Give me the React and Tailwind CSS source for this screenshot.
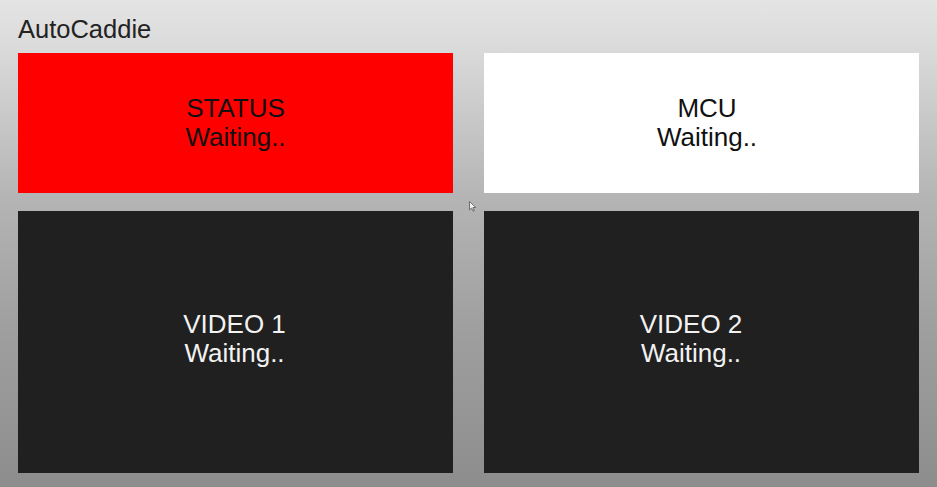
import React from "react";

const panels = [
  { title: "STATUS", box: "bg-[#ff0000] text-[#111111]", shift: "" },
  { title: "MCU", box: "bg-white text-[#111111]", shift: "pl-[11px]" },
  { title: "VIDEO 1", box: "bg-[#202020] text-[#f2f2f2] pb-[6px]", shift: "pr-[2px]" },
  { title: "VIDEO 2", box: "bg-[#202020] text-[#f2f2f2] pb-[6px]", shift: "pr-[21px]" },
];

const Panel = ({ title, box, shift }) => {
  return (
    <div className={`flex items-center justify-center ${box}`}>
      <div className={`text-center text-[26px] leading-[29px] ${shift}`}>
        <div>{title}</div>
        <div>Waiting..</div>
      </div>
    </div>
  );
};

const App = () => {
  return (
    <div
      className="relative w-[937px] h-[487px] overflow-hidden flex flex-col px-[18px] pt-[14px] pb-[14px] bg-[linear-gradient(180deg,#e4e4e4_0%,#dadada_10%,#b5b5b5_40%,#a0a0a0_66%,#8d8d8d_100%)]"
      style={{ fontFamily: '"Liberation Sans", Arial, sans-serif' }}
    >
      {/* header */}
      <h1 className="text-[25.5px] leading-[30px] text-[#222222] font-normal">AutoCaddie</h1>

      {/* panels */}
      <div className="mt-[9px] flex-1 grid grid-cols-2 grid-rows-[140px_262px] gap-x-[31px] gap-y-[18px]">
        {panels.map((p) => (
          <Panel key={p.title} {...p} />
        ))}
      </div>

      {/* mouse pointer from the capture */}
      <svg
        className="absolute left-[469px] top-[201px]"
        width="8"
        height="11"
        viewBox="0 0 8 11"
      >
        <path d="M0.5 0.5 L0.5 9 L2.6 7 L4 10.2 L5.3 9.6 L3.9 6.5 L6.8 6.5 Z" fill="#f4f4f4" stroke="#555555" strokeWidth="0.8" />
      </svg>
    </div>
  );
};

export default App;
